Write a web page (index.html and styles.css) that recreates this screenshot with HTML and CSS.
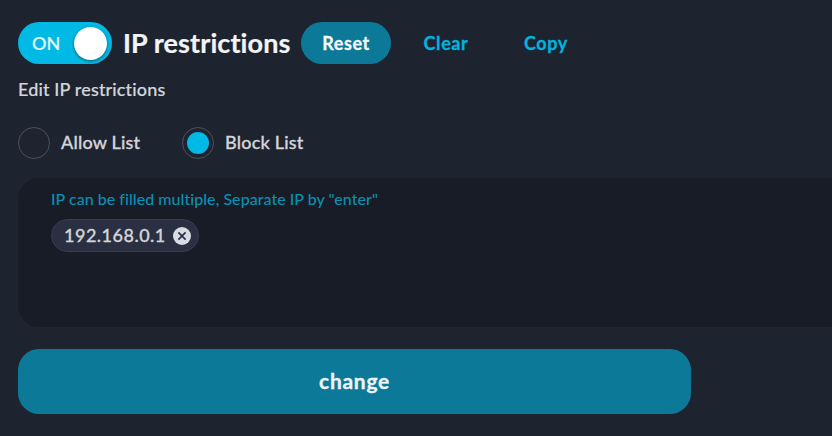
FILE: index.html
```html
<!DOCTYPE html>
<html lang="en">
<head>
  <meta charset="UTF-8">
  <meta name="viewport" content="width=device-width, initial-scale=1.0">
  <title>IP restrictions</title>
  <link rel="stylesheet" href="styles.css">
</head>
<body>
  <header class="toolbar">
    <button class="toggle" type="button" role="switch" aria-checked="true">
      <span class="toggle-label">ON</span>
      <span class="toggle-knob"></span>
    </button>
    <h1>IP restrictions</h1>
    <button class="pill pill-filled" type="button">Reset</button>
    <button class="pill" type="button">Clear</button>
    <button class="pill" type="button">Copy</button>
  </header>

  <p class="subtitle">Edit IP restrictions</p>

  <div class="list-type">
    <label class="radio">
      <input type="radio" name="list-type" value="allow">
      <span>Allow List</span>
    </label>
    <label class="radio">
      <input type="radio" name="list-type" value="block" checked>
      <span>Block List</span>
    </label>
  </div>

  <div class="ip-box">
    <div class="ip-hint">IP can be filled multiple, Separate IP by "enter"</div>
    <div class="ip-tag">
      <span class="ip-value">192.168.0.1</span>
      <svg class="ip-remove" viewBox="0 0 18 18">
        <circle cx="9" cy="9" r="9" fill="#d9dde3"/>
        <path d="M5.4 5.4l7.2 7.2M12.6 5.4l-7.2 7.2" stroke="#2a3042" stroke-width="1.7"/>
      </svg>
    </div>
  </div>

  <button class="change-button" type="button">change</button>
</body>
</html>
```
FILE: styles.css
```css
* {
  box-sizing: border-box;
}

body {
  margin: 0;
  padding: 22px 0 0 18px;
  height: 436px;
  overflow: hidden;
  background-color: #1e2330;
  color: #d3d5d9;
  font-family: Lato, "Open Sans", sans-serif;
  font-size: 18px;
  font-weight: 500;
  font-variant-ligatures: none;
}

button {
  border: none;
  padding: 0;
  font-family: inherit;
  cursor: pointer;
}

.toolbar {
  display: flex;
  align-items: center;
  height: 42px;
  white-space: nowrap;
}

.toggle {
  display: flex;
  align-items: center;
  justify-content: space-between;
  width: 94px;
  height: 42px;
  padding: 0 5px 0 14px;
  border-radius: 21px;
  background-color: #00b9e4;
}

.toggle-label {
  color: #e3f6fb;
  font-size: 18px;
  font-weight: 500;
  -webkit-text-stroke: 0.2px;
}

.toggle-knob {
  width: 33px;
  height: 33px;
  border-radius: 50%;
  background-color: #ffffff;
  box-shadow: 0 1px 3px rgba(0, 0, 0, 0.5);
}

h1 {
  width: 178px;
  margin: 0 0 0 11px;
  color: #f3f4f6;
  font-size: 27px;
  line-height: 42px;
  font-weight: 700;
  letter-spacing: 0.1px;
  -webkit-text-stroke: 0.2px;
}

.pill {
  width: 90px;
  height: 42px;
  margin-right: 10px;
  padding-bottom: 1px;
  border-radius: 21px;
  background-color: transparent;
  color: #00b4df;
  font-size: 18px;
  font-weight: 700;
  letter-spacing: 0.6px;
  -webkit-text-stroke: 0.3px;
}

.pill-filled {
  background-color: #0d7998;
  color: #f3f8fa;
}

.subtitle {
  margin: 14px 0 0;
  line-height: 22px;
  letter-spacing: 0.15px;
  -webkit-text-stroke: 0.2px;
}

.list-type {
  display: flex;
  gap: 42px;
  margin-top: 27px;
}

.radio {
  display: flex;
  align-items: center;
  gap: 11px;
  height: 32px;
}

.radio span {
  width: 79px;
  padding-bottom: 2px;
  white-space: nowrap;
  letter-spacing: 0.2px;
  -webkit-text-stroke: 0.3px;
}

.radio input {
  appearance: none;
  width: 32px;
  height: 32px;
  margin: 0;
  padding: 4px;
  border: 1px solid #4b505b;
  border-radius: 50%;
}

.radio input:checked {
  background: #00b9e4 content-box;
}

.ip-box {
  height: 149px;
  margin-top: 19px;
  padding: 11px 33px;
  border-radius: 21px 0 0 21px;
  background-color: #181c26;
}

.ip-hint {
  color: #0990b2;
  font-size: 16px;
  line-height: 20px;
  letter-spacing: 0.04px;
}

.ip-tag {
  display: flex;
  align-items: center;
  justify-content: space-between;
  width: 148px;
  height: 33px;
  margin-top: 10px;
  padding: 0 7px 0 12px;
  border: 1px solid #353e55;
  border-radius: 17px;
  background-color: #2a3042;
}

.ip-value {
  padding-bottom: 2px;
  letter-spacing: 0.5px;
  -webkit-text-stroke: 0.3px;
}

.ip-remove {
  width: 18px;
  height: 18px;
}

.change-button {
  display: block;
  width: 673px;
  height: 65px;
  margin-top: 22px;
  padding-bottom: 2px;
  border-radius: 21px;
  background-color: #0d7998;
  color: #eef5f8;
  font-size: 21px;
  font-weight: 700;
  letter-spacing: 0.7px;
  -webkit-text-stroke: 0.3px;
}
```
